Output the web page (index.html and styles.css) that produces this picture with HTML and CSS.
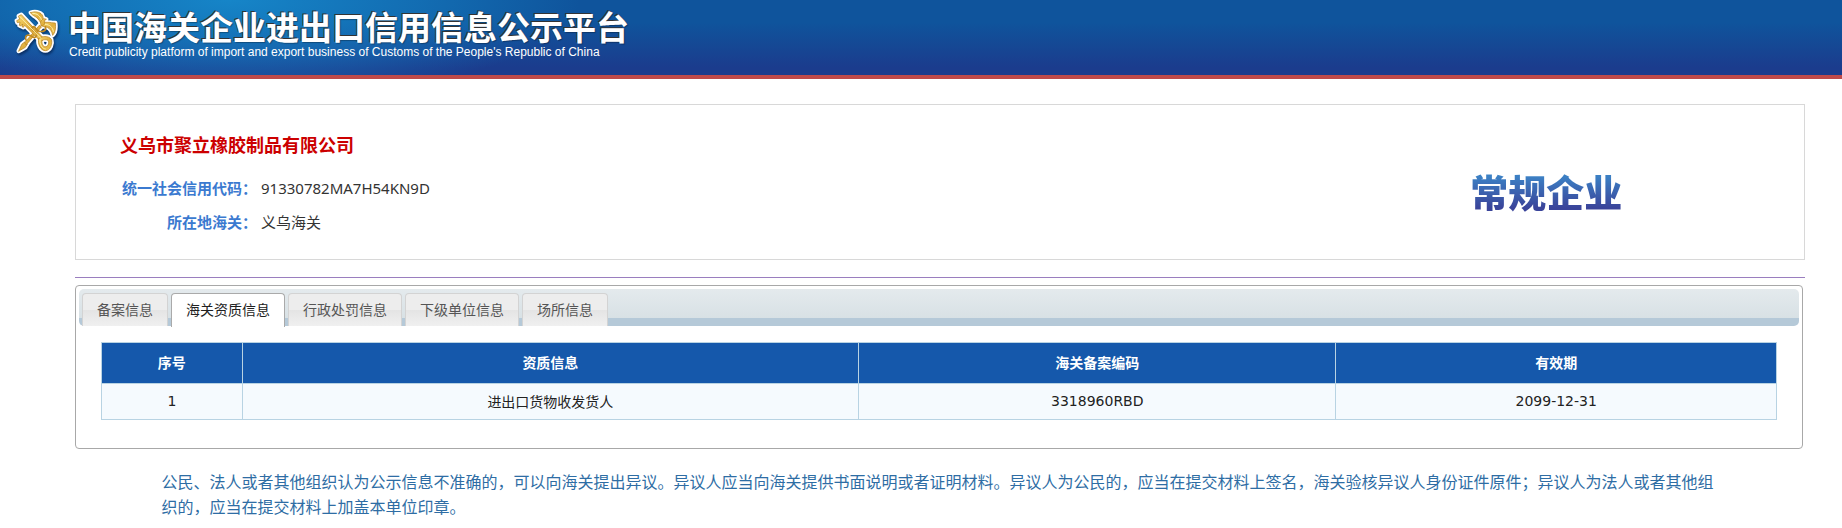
FILE: index.html
```
<!DOCTYPE html>
<html lang="zh-CN">
<head>
    <meta charset="UTF-8">
    <meta name="viewport" content="width=device-width, initial-scale=1.0">
    <title>中国海关企业进出口信用信息公示平台</title>
    <link rel="stylesheet" href="styles.css">
</head>
<body>
    <header class="header">
        <svg class="logo" viewBox="36 24 144 144" aria-hidden="true">
            <defs>
                <linearGradient id="gold" x1="0" y1="0" x2="1" y2="1">
                    <stop offset="0" stop-color="#f6d873"/>
                    <stop offset="0.5" stop-color="#e0ae3c"/>
                    <stop offset="1" stop-color="#edc758"/>
                </linearGradient>
                <g id="emblem">
                    <!-- caduceus staff -->
                    <path d="M56 153 L66 132 L74 126 L82 132 L76 142 L62 150 Z"/>
                    <path d="M74 128 L118 76 L124 81 L80 133 Z"/>
                    <!-- wings -->
                    <path d="M92 38 C104 33 120 36 126 44 C130 50 130 56 129 62 L122 68 C116 58 112 54 106 50 C100 46 94 44 92 38 Z"/>
                    <path d="M126 66 C138 68 146 66 154 68 L166 69 C168 84 166 98 158 106 C156 94 150 86 142 82 C136 80 130 80 126 78 Z"/>
                    <path d="M122 68 C124 56 132 54 139 58 L133 62 C136 70 132 78 124 78 Z"/>
                    <!-- key -->
                    <path d="M56 48 L64 44 L128 112 L118 120 L74 76 L70 82 L66 80 L68 72 L62 78 L58 76 L60 66 L52 68 L50 62 L58 58 Z"/>
                    <path fill-rule="evenodd" d="M116 116 C124 108 146 106 154 118 C158 130 152 152 136 152 C122 152 112 132 116 116 Z M126 122 C124 132 130 142 138 140 C146 138 148 126 144 121 C138 118 130 118 126 122 Z"/>
                </g>
            </defs>
            <use href="#emblem" class="logo-edge"/>
            <use href="#emblem" class="logo-line"/>
            <!-- snakes -->
            <path class="logo-snake" d="M78 120 C72 104 88 102 96 110 C104 118 116 106 106 96 C96 92 92 82 100 80 C108 80 108 92 118 94 C130 96 140 92 136 80"/>
            <path class="logo-shine" d="M60 50 L122 114 M98 40 C112 40 120 48 124 58 M136 73 C150 74 158 82 160 94 M120 118 C118 132 126 146 136 147"/>
        </svg>
        <div class="brand">
            <h1>中国海关企业进出口信用信息公示平台</h1>
            <p>Credit publicity platform of import and export business of Customs of the People's Republic of China</p>
        </div>
    </header>

    <main class="container">
        <section class="company">
            <div class="company-info">
                <h2>义乌市聚立橡胶制品有限公司</h2>
                <dl>
                    <dt>统一社会信用代码：</dt>
                    <dd>91330782MA7H54KN9D</dd>
                    <dt>所在地海关：</dt>
                    <dd>义乌海关</dd>
                </dl>
            </div>
            <div class="company-level"><span>常规企业</span></div>
        </section>

        <section class="tabs">
            <ul class="tabs-nav">
                <li><a href="#record">备案信息</a></li>
                <li class="active"><a href="#qualification">海关资质信息</a></li>
                <li><a href="#penalty">行政处罚信息</a></li>
                <li><a href="#units">下级单位信息</a></li>
                <li><a href="#places">场所信息</a></li>
            </ul>
            <div class="tabs-panel" id="qualification">
                <table>
                    <colgroup>
                        <col class="col-no">
                        <col class="col-info">
                        <col class="col-code">
                        <col class="col-date">
                    </colgroup>
                    <thead>
                        <tr>
                            <th>序号</th>
                            <th>资质信息</th>
                            <th>海关备案编码</th>
                            <th>有效期</th>
                        </tr>
                    </thead>
                    <tbody>
                        <tr>
                            <td>1</td>
                            <td>进出口货物收发货人</td>
                            <td>3318960RBD</td>
                            <td>2099-12-31</td>
                        </tr>
                    </tbody>
                </table>
            </div>
        </section>

        <p class="notice">公民、法人或者其他组织认为公示信息不准确的，可以向海关提出异议。异议人应当向海关提供书面说明或者证明材料。异议人为公民的，应当在提交材料上签名，海关验核异议人身份证件原件；异议人为法人或者其他组织的，应当在提交材料上加盖本单位印章。</p>
    </main>
</body>
</html>
```
FILE: styles.css
```
* {
    box-sizing: border-box;
}
body {
    margin: 0;
    background-color: #fff;
    color: #333;
    font-family: "Noto Sans CJK SC", sans-serif;
    font-size: 14px;
}
h1, h2, p, dl, dd, ul {
    margin: 0;
    padding: 0;
}

/* header */
.header {
    display: flex;
    align-items: flex-start;
    height: 79px;
    padding: 8px 12px 0;
    border-bottom: 4px solid #bf4a4a;
    background:
        radial-gradient(ellipse 350px 100px at 230px 0, #1685c8, rgba(22, 133, 200, 0.5) 55%, rgba(22, 133, 200, 0)) no-repeat,
        linear-gradient(#0f549c 30%, #1b3c8d 90%);
}
.logo {
    width: 48px;
    height: 48px;
    margin-right: 8px;
    stroke-linejoin: round;
    stroke-linecap: round;
    filter: drop-shadow(1px 2px 1px rgba(0, 20, 60, 0.6));
}
.logo-edge {
    fill: #fff;
    stroke: #fff;
    stroke-width: 13;
}
.logo-line {
    fill: url(#gold);
    stroke: #b47b18;
    stroke-width: 2;
}
.logo-snake {
    fill: none;
    stroke: #c08a22;
    stroke-width: 5;
}
.logo-shine {
    fill: none;
    stroke: #fff0a8;
    stroke-width: 3;
}
.brand {
    color: #fff;
}
.brand h1 {
    font-size: 33px;
    font-weight: 700;
    line-height: 37px;
    text-shadow: -1px -1px 0 #333, 1px 1px 1px rgba(0, 0, 0, 0.3);
}
.brand p {
    padding-left: 1px;
    font-family: "Liberation Sans", Arial, sans-serif;
    font-size: 12px;
    line-height: 14px;
}

.container {
    margin: 25px 37px 0 75px;
}

/* company card */
.company {
    display: flex;
    border: 1px solid #d8d8d8;
}
.company-info {
    width: 70%;
    padding: 24px 0 20px 44px;
}
.company-info h2 {
    color: #c00;
    font-size: 18px;
    line-height: 30px;
}
.company-info dl {
    display: grid;
    grid-template-columns: 137px 1fr;
    column-gap: 4px;
    margin-top: 12px;
    font-size: 15px;
    line-height: 34px;
}
.company-info dt {
    color: #3b7ad0;
    font-weight: 700;
    text-align: right;
}
.company-info dd {
    font-family: "Noto Sans", "Noto Sans CJK SC", sans-serif;
}
.company-level {
    display: flex;
    width: 30%;
    padding: 18px 0 0 3px;
    align-items: center;
    justify-content: center;
}
.company-level span {
    background: linear-gradient(#3c80c4 20%, #3a449a 85%);
    -webkit-background-clip: text;
    background-clip: text;
    color: transparent;
    font-size: 38px;
    font-weight: 900;
    line-height: 48px;
}

/* tabs */
.tabs {
    position: relative;
    margin: 25px 2px 0 0;
    padding: 3px;
    border: 1px solid #a8a8a8;
    border-radius: 4px;
}
.tabs::before {
    content: "";
    position: absolute;
    top: -9px;
    left: -1px;
    right: -3px;
    border-top: 1px solid #9a7ebf;
}
.tabs-nav {
    display: flex;
    gap: 3px;
    height: 37px;
    padding: 4px 3px 0;
    border-radius: 5px;
    background: linear-gradient(#e4eaed, #d8e1e5 29px, #b5c9d8 29px);
    list-style: none;
}
.tabs-nav li {
    height: 33px;
    border: 1px solid #d3d3d3;
    border-bottom: 0;
    border-radius: 4px 4px 0 0;
    background: linear-gradient(#ededed 50%, #e4e4e4 50%, #f0f0f0);
}
.tabs-nav a {
    display: block;
    padding: 0 14px;
    color: #555;
    line-height: 30px;
    text-decoration: none;
}
.tabs-nav .active {
    height: 34px;
    border-color: #aaa;
    background: #fff;
}
.tabs-nav .active a {
    color: #212121;
}
.tabs-panel {
    padding: 16px 22px 25px;
}
.tabs-panel table {
    width: 100%;
    border-collapse: collapse;
    table-layout: fixed;
    text-align: center;
}
.col-no {
    width: 8.4%;
}
.col-info {
    width: 36.8%;
}
.col-code {
    width: 28.5%;
}
.tabs-panel th,
.tabs-panel td {
    padding: 0 0 2px;
    border: 1px solid #b8d3e3;
}
.tabs-panel th {
    height: 41px;
    background-color: #1558ab;
    color: #fff;
}
.tabs-panel td {
    height: 36px;
    background-color: #f5fafe;
    color: #222;
    font-family: "DejaVu Sans", "Noto Sans CJK SC", sans-serif;
}

.notice {
    padding: 20px 5% 0;
    color: #2e6da4;
    font-size: 16px;
    line-height: 25px;
}
```
